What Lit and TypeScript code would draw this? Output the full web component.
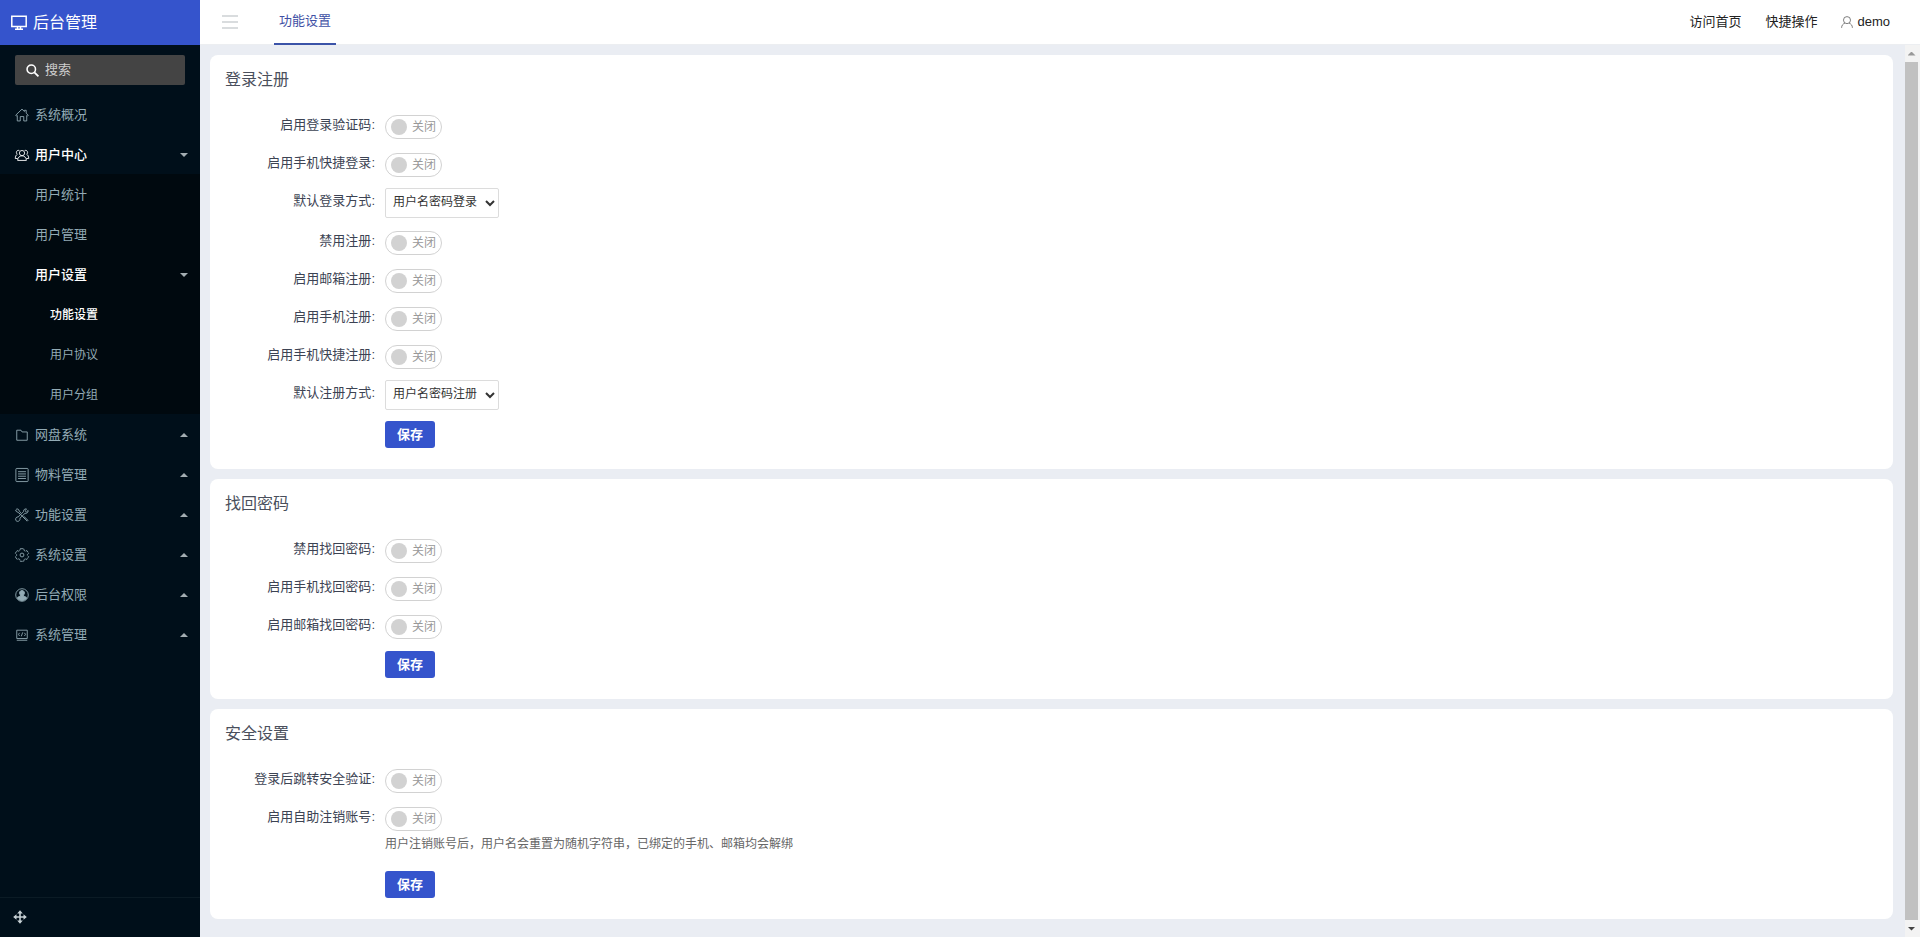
import { LitElement, html, svg, css, nothing, type TemplateResult } from "lit";
import { customElement, property, state } from "lit/decorators.js";
import { classMap } from "lit/directives/class-map.js";

const glyphs: Record<string, TemplateResult> = {
  monitor: svg`<path d="M.8 1.200h14.400v10.300H.8z" stroke-width="1.500"/><path d="M6.500 12v1.500M9.500 12v1.500M4 14.200h8" stroke-width="1.500"/>`,
  search: svg`<circle cx="6.500" cy="6.500" r="5.200" stroke-width="1.900"/><path d="M10.300 10.300l5 5" stroke-width="2.200"/>`,
  home: svg`<path d="M.8 8.200L8 1.300l2.800 2.700V2.600h2v3.300l2.400 2.300-1 1-.8-.7v6.300H10V9.800H6v5H2.600V8.500l-.8.700z"/>`,
  users: svg`<circle cx="8" cy="5.800" r="3"/><path d="M3 14.200c0-3.200 2.200-5.300 5-5.300s5 2.100 5 5.300zM5 2.800C3 2.200 1.400 3.500 1.600 5.400c.1.800.5 1.500 1 1.800C1.200 8 .4 9.500.3 12h2.800M11 2.800c2-.6 3.600.7 3.400 2.600-.1.800-.5 1.500-1 1.800 1.400.8 2.200 2.300 2.300 4.800h-2.800"/>`,
  folder: svg`<path d="M2 2.500h4.800l1.300 2H14v9.500H2z"/>`,
  list: svg`<rect x="1" y=".5" width="14" height="15" rx="1"/><path d="M3.500 4.200h9M3.500 6.800h9M3.500 9.400h9M3.500 12h9"/>`,
  tools: svg`<path d="M4.500 5.500l6.800 6.800M10.200 9.500l4.600 4.600-.9.900-4.500-4.600M5.500 6.800L3.600 5 1.500 4 .8 2.300l1.400-1.400L4 1.600l1 2.200 1.900 1.800M15 2.800l-2 1.800-1.600-1.500 1.800-2C11.300.6 9.400 2 9.700 4.200l-6 6C1.700 10 .4 11.600.8 13.700c.3 1.300 2 2 3.400 1.300 1.300-.7 1.800-2 1.400-3.300l5.800-5.600c2.200.4 4-1.200 3.600-3.300z"/>`,
  gear: svg`<path d="M6 .8h4l.4 2 1.300.8 2-.6 1.900 3-1.400 1.400v1.200l1.400 1.400-1.900 3-2-.6-1.300.8-.4 2H6l-.4-2-1.300-.8-2 .6-1.900-3 1.400-1.400V7.400L.4 6l1.900-3 2 .6 1.300-.8z" stroke-dasharray="3.500 .6"/><circle cx="8" cy="8" r="2.200"/>`,
  person: svg`<circle cx="8" cy="8" r="7.200"/><path d="M8 2.800a2.900 2.900 0 0 1 2 5l-.4 1.300 3.400 1.500v1.700C11.500 13.700 9.900 14.300 8 14.300s-3.500-.6-5-2v-1.700l3.400-1.500L6 7.800a2.900 2.900 0 0 1 2-5z" fill="currentColor"/>`,
  code: svg`<path d="M2 2.500h12v9.500H2zM2 14h12M5.200 5.500L4 7.300l1.200 1.800M10.800 5.500L12 7.300l-1.200 1.800M7.200 9.500l1.600-4.500"/>`,
  user: svg`<circle cx="8" cy="5.500" r="4.700"/><path d="M.8 15.800c0-3.300 1.800-5.300 4.400-6.300M15.200 15.800c0-3.300-1.800-5.300-4.400-6.300"/>`,
  move: svg`<path d="M8 3v10M3 8h10" stroke-width="1.800"/><path d="M8 .2l3.200 3.800H4.800zM8 15.800l3.200-3.800H4.800zM.2 8L4 4.800v6.400zM15.800 8L12 4.800v6.400z" fill="currentColor" stroke="none"/>`,
};

@customElement("ui-icon")
export class UiIcon extends LitElement {
  static styles = css`
    :host { display: inline-flex; flex: none; width: 14px; height: 14px; }
    .glyph { width: 100%; height: 100%; fill: none; stroke: currentColor; stroke-width: 1; overflow: visible; }
  `;
  @property() name = "";
  render() {
    return html`<svg class="glyph" viewBox="0 0 16 16" aria-hidden="true">${glyphs[this.name] ?? nothing}</svg>`;
  }
}

interface NavItem {
  label: string;
  level: number;
  icon?: string;
  caret?: "up" | "down";
  active?: boolean;
}

interface Field {
  id: string;
  label: string;
  option?: string;
  help?: string;
}

const navTop: NavItem[] = [
  { label: "系统概况", level: 1, icon: "home" },
  { label: "用户中心", level: 1, icon: "users", caret: "down", active: true },
];
const navChildren: NavItem[] = [
  { label: "用户统计", level: 2 },
  { label: "用户管理", level: 2 },
  { label: "用户设置", level: 2, caret: "down", active: true },
  { label: "功能设置", level: 3, active: true },
  { label: "用户协议", level: 3 },
  { label: "用户分组", level: 3 },
];
const navBottom: NavItem[] = [
  { label: "网盘系统", level: 1, icon: "folder", caret: "up" },
  { label: "物料管理", level: 1, icon: "list", caret: "up" },
  { label: "功能设置", level: 1, icon: "tools", caret: "up" },
  { label: "系统设置", level: 1, icon: "gear", caret: "up" },
  { label: "后台权限", level: 1, icon: "person", caret: "up" },
  { label: "系统管理", level: 1, icon: "code", caret: "up" },
];

const sections: { title: string; fields: Field[] }[] = [
  {
    title: "登录注册",
    fields: [
      { id: "login-captcha", label: "启用登录验证码" },
      { id: "login-phone", label: "启用手机快捷登录" },
      { id: "login-default", label: "默认登录方式", option: "用户名密码登录" },
      { id: "register-off", label: "禁用注册" },
      { id: "register-email", label: "启用邮箱注册" },
      { id: "register-phone", label: "启用手机注册" },
      { id: "register-quick", label: "启用手机快捷注册" },
      { id: "register-default", label: "默认注册方式", option: "用户名密码注册" },
    ],
  },
  {
    title: "找回密码",
    fields: [
      { id: "reset-off", label: "禁用找回密码" },
      { id: "reset-phone", label: "启用手机找回密码" },
      { id: "reset-email", label: "启用邮箱找回密码" },
    ],
  },
  {
    title: "安全设置",
    fields: [
      { id: "verify-after-login", label: "登录后跳转安全验证" },
      {
        id: "self-delete",
        label: "启用自助注销账号",
        help: "用户注销账号后，用户名会重置为随机字符串，已绑定的手机、邮箱均会解绑",
      },
    ],
  },
];

@customElement("app-root")
export class AppRoot extends LitElement {
  static styles = css`
    :host {
      display: grid;
      grid-template-columns: 200px minmax(0, 1fr);
      height: 100vh;
      font: 13px/20px "Liberation Sans", "Noto Sans CJK SC", sans-serif;
      color: #3c4353;
      background: #eaedf3;
    }
    *, *::before, *::after { box-sizing: border-box; }
    a { color: inherit; text-decoration: none; }
    button, input, select { font: inherit; margin: 0; }

    .sidebar { display: flex; flex-direction: column; min-height: 0; background: #000f1a; color: #93abb5; }
    .brand {
      display: flex; align-items: center; gap: 6px; flex: none; height: 45px; padding: 0 11px;
      background: #3554cc; color: #fff; font-size: 16px;
    }
    .brand-icon { width: 16px; height: 16px; }
    .search {
      display: flex; align-items: center; gap: 6px; flex: none; height: 30px; margin: 10px 15px 9px;
      padding: 0 11px; border-radius: 2px; background: #444; color: #fff;
    }
    .search-icon { width: 13px; height: 13px; }
    .search-input {
      flex: 1; min-width: 0; padding: 0; border: 0; outline: 0; background: none; color: #fff;
    }
    .search-input::placeholder { color: #ccc; opacity: 1; }
    .menu { flex: 1; min-height: 0; overflow: hidden auto; scrollbar-width: none; }
    .submenu { background: #00090f; }
    .item { display: flex; align-items: center; height: 40px; padding: 2px 12px 0 15px; }
    .item.level-2 { padding-left: 35px; }
    .item.level-3 { padding-left: 50px; font-size: 12px; }
    .item.active { color: #fff; font-weight: 500; }
    .item-icon { margin-right: 6px; }
    .item-label { flex: 1; }
    .caret { width: 8px; height: 4px; background: #a3adb2; clip-path: polygon(0 0, 100% 0, 50% 100%); }
    .caret.up { clip-path: polygon(50% 0, 100% 100%, 0 100%); }
    .side-foot {
      display: flex; align-items: center; flex: none; height: 40px; padding: 0 13px 2px;
      border-top: 1px solid #0b1b25; color: #c8d2d6;
    }
    .icon-button { display: inline-flex; padding: 0; border: 0; background: none; color: inherit; cursor: pointer; }

    .main { display: flex; flex-direction: column; min-width: 0; min-height: 0; }
    .topbar { display: flex; align-items: stretch; flex: none; height: 45px; padding: 0 30px 0 22px; background: #fff; border-bottom: 1px solid #eceef1; }
    .burger { display: flex; flex-direction: column; justify-content: center; gap: 4px; width: 16px; }
    .burger-line { width: 100%; height: 2px; background: #d9dcde; }
    .tab {
      display: flex; align-items: center; height: 45px; margin-left: 36px; padding: 0 5px 2px;
      border-bottom: 2px solid #3b53a8; color: #3f51a5;
    }
    .top-links { display: flex; align-items: center; gap: 24px; margin-left: auto; color: #222; }
    .account { display: inline-flex; align-items: center; gap: 4px; }
    .account-icon { width: 12px; height: 12px; color: #555; }

    .body { display: flex; flex: 1; min-height: 0; }
    .content {
      display: flex; flex-direction: column; gap: 10px; flex: 1; min-width: 0; padding: 10px 12px 10px 10px;
      overflow: hidden auto; scrollbar-width: none;
    }
    .scrollbar { display: flex; flex-direction: column; flex: none; width: 15px; padding-right: 2px; background: #f3f3f3; }
    .scroll-arrow { display: flex; align-items: center; justify-content: center; flex: none; height: 17px; }
    .triangle { width: 8px; height: 4px; background: #999; clip-path: polygon(50% 0, 100% 100%, 0 100%); }
    .triangle.down { background: #444; clip-path: polygon(0 0, 100% 0, 50% 100%); }
    .thumb { flex: 1; background: #c1c1c1; }

    .card { flex: none; padding: 13px 16px 20px 15px; border-radius: 8px; background: #fff; }
    .title { margin: 0 0 20px; font-size: 16px; line-height: 24px; font-weight: 400; color: #4a4f5c; }
    .row { display: grid; grid-template-columns: 150px minmax(0, 1fr); column-gap: 10px; margin-bottom: 10px; }
    .row-label { text-align: right; line-height: 26px; }
    .control { display: flex; align-items: center; min-height: 28px; padding-top: 2px; }
    .control.choice { padding: 0; }
    .switch {
      display: inline-flex; align-items: center; gap: 5px; height: 24px; padding: 0 5px;
      border: 1px solid #d2d2d2; border-radius: 12px; color: #999; font-size: 12px; line-height: 22px; cursor: pointer;
    }
    .knob { appearance: none; width: 16px; height: 16px; border-radius: 50%; background: #d2d2d2; cursor: pointer; }
    .knob:checked { order: 1; background: #3554cc; }
    .select {
      height: 30px; padding: 0 4px 2px 3px; border: 1px solid #dcdcdc; border-radius: 2px;
      background: #fff; color: #333; font-size: 12px;
    }
    .help { grid-column: 2; margin: 0; padding-bottom: 4px; color: #666; font-size: 12px; line-height: 24px; }
    .actions { padding: 1px 0 0 160px; }
    .save {
      display: block; height: 27px; margin-bottom: 1px; padding: 0 12px; border: 0; border-radius: 3px;
      background: #3554cc; color: #fff; font-weight: 700; cursor: pointer;
    }
  `;

  @state() private enabled = new Set<string>();

  private toggle(id: string) {
    const next = new Set(this.enabled);
    if (!next.delete(id)) next.add(id);
    this.enabled = next;
  }

  private navItem = (item: NavItem) => html`
    <a href="#" class=${classMap({ item: true, [`level-${item.level}`]: true, active: !!item.active })}>
      ${item.icon ? html`<ui-icon class="item-icon" name=${item.icon}></ui-icon>` : nothing}
      <span class="item-label">${item.label}</span>
      ${item.caret ? html`<span class=${classMap({ caret: true, up: item.caret === "up" })}></span>` : nothing}
    </a>
  `;

  private field = (f: Field) => html`
    <div class="row">
      <label class="row-label" for=${f.id}>${f.label}:</label>
      <div class=${classMap({ control: true, choice: !!f.option })}>
        ${f.option
          ? html`<select class="select" id=${f.id}><option>${f.option}</option></select>`
          : html`<label class="switch">
              <input class="knob" type="checkbox" id=${f.id} .checked=${this.enabled.has(f.id)} @change=${() => this.toggle(f.id)} />
              <span>${this.enabled.has(f.id) ? "开启" : "关闭"}</span>
            </label>`}
      </div>
      ${f.help ? html`<p class="help">${f.help}</p>` : nothing}
    </div>
  `;

  render() {
    return html`
      <aside class="sidebar">
        <a class="brand" href="#"><ui-icon class="brand-icon" name="monitor"></ui-icon>后台管理</a>
        <label class="search">
          <ui-icon class="search-icon" name="search"></ui-icon>
          <input class="search-input" type="text" placeholder="搜索" aria-label="搜索" />
        </label>
        <nav class="menu">
          ${navTop.map(this.navItem)}
          <div class="submenu">${navChildren.map(this.navItem)}</div>
          ${navBottom.map(this.navItem)}
        </nav>
        <div class="side-foot">
          <button class="icon-button" aria-label="全屏"><ui-icon name="move"></ui-icon></button>
        </div>
      </aside>
      <div class="main">
        <header class="topbar">
          <button class="icon-button burger" aria-label="菜单">
            <span class="burger-line"></span><span class="burger-line"></span><span class="burger-line"></span>
          </button>
          <a class="tab" href="#">功能设置</a>
          <div class="top-links">
            <a href="#">访问首页</a>
            <a href="#">快捷操作</a>
            <a class="account" href="#"><ui-icon class="account-icon" name="user"></ui-icon>demo</a>
          </div>
        </header>
        <div class="body">
          <main class="content">
            ${sections.map(
              (s) => html`
                <form class="card" @submit=${(e: Event) => e.preventDefault()}>
                  <h2 class="title">${s.title}</h2>
                  ${s.fields.map(this.field)}
                  <div class="actions"><button class="save" type="submit">保存</button></div>
                </form>
              `,
            )}
          </main>
          <div class="scrollbar" aria-hidden="true">
            <span class="scroll-arrow"><span class="triangle"></span></span>
            <span class="thumb"></span>
            <span class="scroll-arrow"><span class="triangle down"></span></span>
          </div>
        </div>
      </div>
    `;
  }
}
